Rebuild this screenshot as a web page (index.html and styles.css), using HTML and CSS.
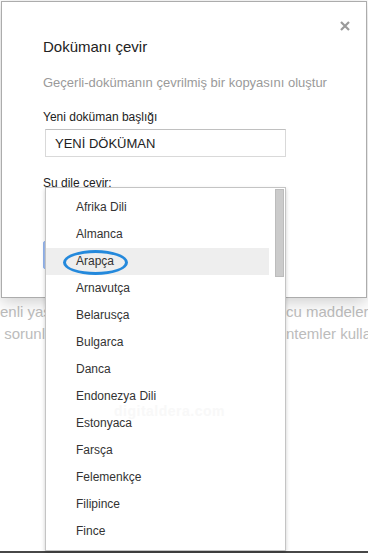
FILE: index.html
```html
<!DOCTYPE html>
<html lang="tr">
<head>
<meta charset="utf-8">
<link rel="stylesheet" href="styles.css">
</head>
<body>
<div class="page">
  <div class="bgline"><span class="l">enli yaşam</span><span class="gap"></span><span class="r">cu maddelerden</span></div>
  <div class="bgline"><span class="l">&nbsp;sorunlar</span><span class="gap"></span><span class="r">ntemler kullanın</span></div>
</div>
<div class="taskbar"></div>

<div class="dialog">
  <button class="close" aria-label="Kapat">
    <svg width="10" height="10" viewBox="0 0 10 10"><path d="M1 1L9 9M9 1L1 9" stroke="#9a9a9a" stroke-width="2.2" fill="none"/></svg>
  </button>
  <h1 class="title">Dokümanı çevir</h1>
  <p class="desc">Geçerli-dokümanın çevrilmiş bir kopyasını oluştur</p>
  <div class="label">Yeni doküman başlığı</div>
  <div class="input">YENİ DÖKÜMAN</div>
  <div class="label label-lang">Şu dile çevir:</div>
  <div class="select"></div>
  <div class="btn-row"><span class="btn"></span></div>
</div>

<div class="menu">
  <ul class="items">
    <li>Afrika Dili</li>
    <li>Almanca</li>
    <li class="hl">Arapça</li>
    <li>Arnavutça</li>
    <li>Belarusça</li>
    <li>Bulgarca</li>
    <li>Danca</li>
    <li>Endonezya Dili</li>
    <li>Estonyaca</li>
    <li>Farsça</li>
    <li>Felemenkçe</li>
    <li>Filipince</li>
    <li>Fince</li>
  </ul>
  <div class="scrollbar"><div class="thumb"></div></div>
</div>

<div class="ring"></div>
<div class="watermark">digitaldera.com</div>
</body>
</html>
```

FILE: styles.css
```css
html, body {
  margin: 0;
  padding: 0;
}
body {
  width: 368px;
  height: 553px;
  overflow: hidden;
  position: relative;
  background: #fff;
  font-family: "Liberation Sans", Arial, sans-serif;
}

/* page behind the modal */
.page {
  height: 551px;
  box-sizing: border-box;
  padding-top: 301px;
  color: #bcbcbc;
  font-size: 15px;
  line-height: 22px;
  overflow: hidden;
}
.bgline {
  display: flex;
  white-space: nowrap;
}
.bgline .l {
  flex: none;
  width: 45px;
  overflow: hidden;
}
.bgline .gap {
  flex: none;
  width: 241px;
}
.bgline .r {
  flex: none;
}
.taskbar {
  height: 2px;
  background: #474747;
}

/* dialog */
.dialog {
  position: absolute;
  left: 1px;
  top: 1px;
  width: 366px;
  box-sizing: border-box;
  border: 1px solid #acacac;
  background: #fff;
  box-shadow: 0 4px 16px rgba(0, 0, 0, 0.2);
  padding: 35px 0 28px 41px;
}
.close {
  position: absolute;
  top: 14px;
  right: 11px;
  width: 20px;
  height: 20px;
  padding: 0;
  border: 0;
  background: transparent;
  display: flex;
  align-items: center;
  justify-content: center;
}
.title {
  margin: 0 0 17px;
  font-size: 15px;
  line-height: 20px;
  font-weight: normal;
  color: #222;
}
.desc {
  margin: 0 0 17px;
  font-size: 13px;
  line-height: 18px;
  color: #9a9a9a;
}
.label {
  font-size: 12px;
  line-height: 16px;
  color: #222;
  margin-bottom: 4px;
}
.input {
  margin-left: 2px;
  width: 241px;
  height: 28px;
  box-sizing: border-box;
  border: 1px solid #d9d9d9;
  border-top-color: #c0c0c0;
  padding: 1px 0 0 9px;
  font-size: 13px;
  line-height: 25px;
  color: #222;
  margin-bottom: 18px;
}
.label-lang {
  margin-bottom: 4px;
}
.select {
  margin-left: 2px;
  width: 241px;
  height: 28px;
  box-sizing: border-box;
  border: 1px solid #d9d9d9;
  margin-bottom: 18px;
}
.btn-row {
  display: flex;
}
.btn {
  width: 70px;
  height: 28px;
  box-sizing: border-box;
  background: #a3c1f4;
  border: 1px solid #93b4ee;
  border-radius: 2px;
}

/* dropdown menu */
.menu {
  position: absolute;
  left: 45px;
  top: 187px;
  width: 241px;
  height: 364px;
  box-sizing: border-box;
  border: 1px solid #c4c4c4;
  background: #fff;
  box-shadow: 0 2px 4px rgba(0, 0, 0, 0.2);
  display: flex;
  overflow: hidden;
}
.items {
  list-style: none;
  margin: 0;
  padding: 6px 0 0;
  width: 223px;
  flex: none;
}
.items li {
  height: 27px;
  line-height: 27px;
  padding-left: 30px;
  font-size: 12px;
  color: #333;
  white-space: nowrap;
}
.items li.hl {
  background: #eeeeee;
}
.scrollbar {
  flex: none;
  width: 16px;
  padding: 1px 0 0 6px;
  box-sizing: border-box;
}
.thumb {
  width: 9px;
  height: 88px;
  box-sizing: border-box;
  background: #cbcbcb;
  border: 1px solid #bcbcbc;
}

/* annotation ring drawn on top of the screenshot */
.ring {
  position: absolute;
  left: 63px;
  top: 250px;
  width: 65px;
  height: 25px;
  box-sizing: border-box;
  border: 3px solid #2489dc;
  border-radius: 50%;
}
.watermark {
  position: absolute;
  left: 114px;
  top: 403px;
  font-size: 14px;
  font-weight: bold;
  color: #f8f8f8;
  letter-spacing: 0.5px;
}
```
